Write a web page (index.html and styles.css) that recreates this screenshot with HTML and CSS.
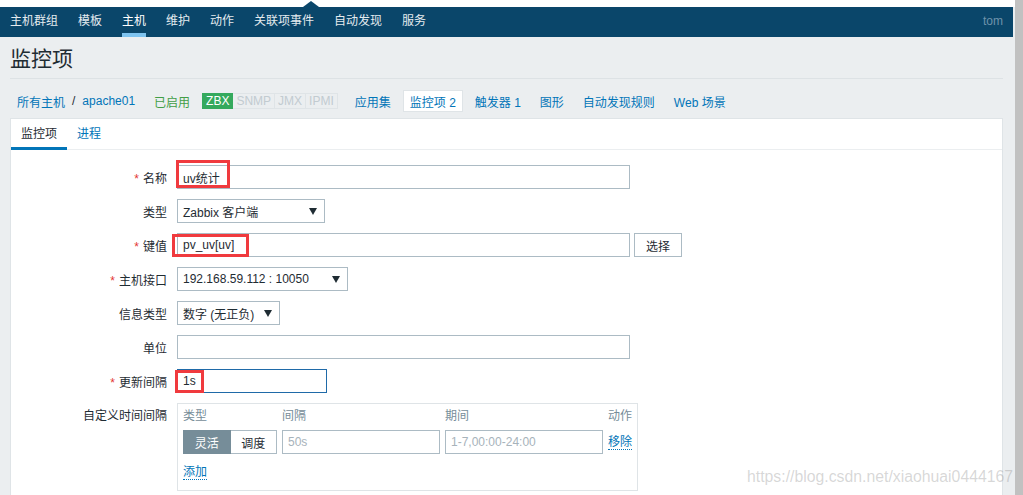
FILE: index.html
```html
<!DOCTYPE html>
<html lang="zh-CN">
<head>
<meta charset="utf-8">
<title>监控项</title>
<link rel="stylesheet" href="styles.css">
</head>
<body>
<div class="page">
  <div class="topstrip"><span class="notch"></span></div>
  <header class="topnav">
    <nav class="menu">
      <a class="menu-item">主机群组</a>
      <a class="menu-item">模板</a>
      <a class="menu-item active">主机</a>
      <a class="menu-item">维护</a>
      <a class="menu-item">动作</a>
      <a class="menu-item">关联项事件</a>
      <a class="menu-item">自动发现</a>
      <a class="menu-item">服务</a>
    </nav>
    <span class="user">tom</span>
  </header>

  <main class="content">
    <h1 class="title">监控项</h1>

    <div class="crumbs">
      <span class="crumb"><a class="link">所有主机</a><span class="sep">/</span><a class="link">apache01</a></span>
      <span class="crumb green">已启用</span>
      <span class="status"><span class="st on">ZBX</span><span class="st">SNMP</span><span class="st">JMX</span><span class="st">IPMI</span></span>
      <a class="crumb link">应用集</a>
      <a class="crumb link selected">监控项 2</a>
      <a class="crumb link">触发器 1</a>
      <a class="crumb link">图形</a>
      <a class="crumb link">自动发现规则</a>
      <a class="crumb link">Web 场景</a>
    </div>

    <section class="panel">
      <div class="tabs">
        <span class="tab active">监控项</span>
        <span class="tab">进程</span>
      </div>

      <div class="form">
        <div class="row">
          <label class="lbl req">名称</label>
          <div class="field">
            <input class="input w-wide" type="text" value="uv统计" readonly>
            <span class="mark mark-name"></span>
          </div>
        </div>

        <div class="row">
          <label class="lbl">类型</label>
          <div class="field">
            <span class="select w-type"><span>Zabbix 客户端</span><svg class="arrow" width="8" height="7" viewBox="0 0 8 7"><polygon points="0,0 8,0 4,7" fill="#1f2c33"/></svg></span>
          </div>
        </div>

        <div class="row">
          <label class="lbl req">键值</label>
          <div class="field">
            <input class="input w-wide" type="text" value="pv_uv[uv]" readonly>
            <button class="btn" type="button">选择</button>
            <span class="mark mark-key"></span>
          </div>
        </div>

        <div class="row">
          <label class="lbl req">主机接口</label>
          <div class="field">
            <span class="select w-iface"><span>192.168.59.112 : 10050</span><svg class="arrow" width="8" height="7" viewBox="0 0 8 7"><polygon points="0,0 8,0 4,7" fill="#1f2c33"/></svg></span>
          </div>
        </div>

        <div class="row">
          <label class="lbl">信息类型</label>
          <div class="field">
            <span class="select w-info"><span>数字 (无正负)</span><svg class="arrow" width="8" height="7" viewBox="0 0 8 7"><polygon points="0,0 8,0 4,7" fill="#1f2c33"/></svg></span>
          </div>
        </div>

        <div class="row">
          <label class="lbl">单位</label>
          <div class="field">
            <input class="input w-wide" type="text" value="" readonly>
          </div>
        </div>

        <div class="row">
          <label class="lbl req">更新间隔</label>
          <div class="field">
            <input class="input w-delay focus" type="text" value="1s" readonly>
            <span class="mark mark-delay"></span>
          </div>
        </div>

        <div class="row top">
          <label class="lbl lbl-top">自定义时间间隔</label>
          <div class="field">
            <div class="ci">
              <div class="ci-grid">
                <span class="ci-head">类型</span>
                <span class="ci-head">间隔</span>
                <span class="ci-head">期间</span>
                <span class="ci-head right">动作</span>

                <span class="seg"><span class="seg-btn on">灵活</span><span class="seg-btn">调度</span></span>
                <input class="input ci-input" type="text" placeholder="50s" readonly>
                <input class="input ci-input" type="text" placeholder="1-7,00:00-24:00" readonly>
                <a class="dlink">移除</a>
              </div>
              <div class="ci-add"><a class="dlink">添加</a></div>
            </div>
          </div>
        </div>
      </div>
    </section>
  </main>
</div>
<div class="scrollbar"></div>
<div class="watermark">https://blog.csdn.net/xiaohuai0444167</div>
</body>
</html>
```

FILE: styles.css
```css
* { box-sizing: border-box; }

html, body {
  margin: 0;
  padding: 0;
}

body {
  width: 1023px;
  height: 495px;
  overflow: hidden;
  display: flex;
  background: #ebeef0;
  font-family: "Liberation Sans", "Noto Sans CJK SC", sans-serif;
  font-size: 12px;
  color: #1f2c33;
  position: relative;
}

a { text-decoration: none; cursor: pointer; }

.page {
  flex: 1;
  min-width: 0;
  display: flex;
  flex-direction: column;
}

.page > *, .content > * { flex-shrink: 0; }

.scrollbar {
  width: 8px;
  background: #c1c1c1;
}

/* ---------- top strip / header ---------- */
.topstrip {
  height: 7px;
  background: #ffffff;
  position: relative;
}

.notch {
  position: absolute;
  left: 303px;
  bottom: 0;
  width: 0;
  height: 0;
  border-left: 8px solid transparent;
  border-right: 8px solid transparent;
  border-bottom: 6px solid #0a466a;
}

.topnav {
  height: 30px;
  margin-right: 2px;
  background: #0a466a;
  display: flex;
  align-items: flex-start;
  justify-content: space-between;
  padding-right: 10px;
}

.menu {
  display: flex;
}

.menu-item {
  display: block;
  margin: 0 10px;
  padding-top: 3px;
  line-height: 23px;
  border-bottom: 4px solid transparent;
  color: #e4ebef;
}

.menu-item.active {
  color: #ffffff;
  border-bottom-color: #7ec3ef;
}

.user {
  line-height: 23px;
  padding-top: 3px;
  color: #6f93aa;
}

/* ---------- content ---------- */
.content {
  padding: 0 12px 0 10px;
  flex: 1 0 auto;
  display: flex;
  flex-direction: column;
}

.title {
  margin: 0;
  padding-top: 3px;
  height: 42px;
  line-height: 38px;
  font-size: 21px;
  font-weight: normal;
  color: #1f2c33;
  border-bottom: 1px solid #dde2e5;
}

.crumbs {
  display: flex;
  align-items: center;
  height: 22px;
  margin: 11px 0 6px;
}

.crumb {
  display: flex;
  align-items: center;
  height: 22px;
  padding: 0 7px;
  margin-right: 5px;
}

.link { color: #0275b8; }
.green { color: #429e47; }

.sep {
  margin: 0 7px;
  color: #1f2c33;
}

.crumb.selected {
  background: #ffffff;
  border: 1px solid #dfe4e7;
  padding: 0 6px;
}

.status {
  display: flex;
  margin-right: 10px;
}

.st {
  display: block;
  height: 16px;
  line-height: 14px;
  padding: 0 3px;
  border: 1px solid #dfe4e7;
  border-left-width: 0;
  color: #c2cbd0;
  background: #ebeef0;
  font-size: 12px;
}

.st.on {
  background: #34a95d;
  border-color: #34a95d;
  border-left-width: 1px;
  color: #ffffff;
}

/* ---------- panel ---------- */
.panel {
  flex: 1 0 auto;
  background: #ffffff;
  border: 1px solid #dfe4e7;
  border-bottom: 0;
}

.tabs {
  display: flex;
  height: 31px;
  border-bottom: 1px solid #ebeef0;
}

.tab {
  display: block;
  height: 31px;
  line-height: 30px;
  padding: 0 10px;
  color: #0275b8;
  border-bottom: 3px solid transparent;
}

.tab.active {
  color: #1f2c33;
  border-bottom-color: #0275b8;
}

.form {
  padding-top: 15px;
}

.row {
  display: flex;
  align-items: center;
  margin-bottom: 10px;
}

.row.top { align-items: flex-start; }

.lbl {
  width: 166px;
  padding-right: 10px;
  text-align: right;
  color: #1f2c33;
}

.lbl.req::before {
  content: "*";
  color: #e33734;
  margin-right: 4px;
}

.lbl-top {
  padding-top: 6px;
  line-height: 14px;
}

.field {
  position: relative;
  display: flex;
  align-items: center;
}

.input {
  height: 24px;
  padding: 0 5px;
  border: 1px solid #acbbc4;
  background: #ffffff;
  font: inherit;
  color: #1f2c33;
  outline: none;
}

.input::placeholder { color: #a7b3bb; }

.w-wide { width: 453px; }
.w-delay { width: 150px; }
.input.focus { border-color: #1f6aa8; }

.select {
  height: 24px;
  padding: 0 7px 0 5px;
  border: 1px solid #acbbc4;
  display: flex;
  align-items: center;
  justify-content: space-between;
  background: #ffffff;
  color: #1f2c33;
}

.arrow { display: block; margin-left: 8px; }

.w-type { width: 148px; }
.w-iface { width: 171px; }
.w-info { width: 103px; }

.btn {
  height: 24px;
  margin-left: 4px;
  padding: 0 11px;
  border: 1px solid #acbbc4;
  background: #ffffff;
  font: inherit;
  color: #1f2c33;
}

/* red annotation boxes drawn over the screenshot */
.mark {
  position: absolute;
  border: 3px solid #f03a3e;
  pointer-events: none;
}

.mark-name { left: -1px; top: -5px; width: 54px; height: 28px; }
.mark-key { left: -5px; top: 1px; width: 77px; height: 23px; }
.mark-delay { left: -2px; top: 1px; width: 29px; height: 23px; }

/* ---------- custom intervals ---------- */
.ci {
  width: 461px;
  border: 1px solid #dfe4e7;
  padding: 1px 4px 8px 5px;
}

.ci-grid {
  display: grid;
  grid-template-columns: 94px 158px 158px 24px;
  grid-template-rows: 22px 24px;
  column-gap: 5px;
  row-gap: 3px;
  align-items: center;
}

.ci-head {
  color: #768d99;
  line-height: 22px;
}

.ci-head.right { text-align: right; }

.seg {
  display: flex;
  height: 24px;
}

.seg-btn {
  flex: 1;
  display: flex;
  align-items: center;
  justify-content: center;
  border: 1px solid #acbbc4;
  border-left-width: 0;
  color: #1f2c33;
  background: #ffffff;
}

.seg-btn.on {
  background: #768d99;
  border-color: #768d99;
  border-left-width: 1px;
  color: #ffffff;
}

.ci-input { width: 158px; }

.dlink {
  color: #0275b8;
  border-bottom: 1px dotted #0275b8;
  line-height: 14px;
  justify-self: start;
}

.ci-add {
  margin-top: 8px;
  height: 20px;
  display: flex;
  align-items: center;
}

/* ---------- watermark ---------- */
.watermark {
  position: absolute;
  left: 747px;
  top: 467px;
  font-family: "Liberation Sans", sans-serif;
  font-size: 15.8px;
  line-height: 20px;
  color: rgba(150, 150, 150, 0.38);
  white-space: nowrap;
  pointer-events: none;
}
```
